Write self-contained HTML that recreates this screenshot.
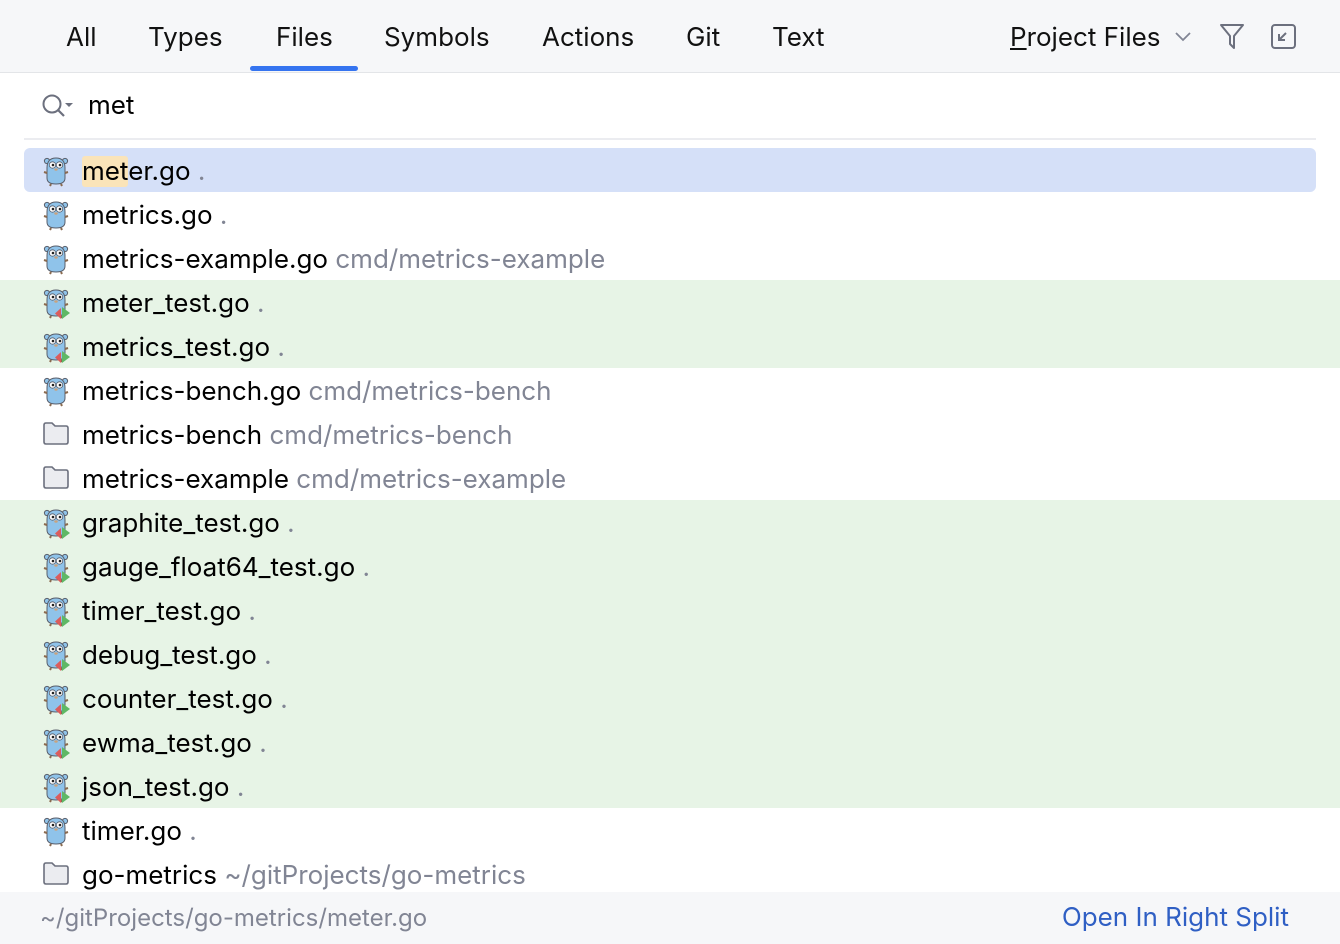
<!DOCTYPE html>
<html><head><meta charset="utf-8"><style>
*{margin:0;padding:0;box-sizing:border-box}
body{width:1340px;height:944px;overflow:hidden;background:#fff;font-family:"Inter","Liberation Sans",sans-serif;color:#000;position:relative}
.hdr{position:absolute;left:0;top:0;width:1340px;height:73px;background:#f6f7f9;border-bottom:1px solid #e3e5e8}
.tab{position:absolute;top:22px;font-size:26px;color:#111}
.ul{position:absolute;left:250px;top:66px;width:108px;height:5px;border-radius:3px;background:#3574f0}
.search{position:absolute;left:88px;top:90px;font-size:26px}
.sep{position:absolute;left:24px;top:138px;width:1292px;height:2px;background:#ebecf0}
.row{position:absolute;left:0;width:1340px;height:44px;font-size:26px;line-height:47px}
.row .t{position:absolute;left:82px;top:0;white-space:nowrap}
.row .g{color:#818594}
.row svg{position:absolute;left:42px;top:7px}
.green{background:#e7f4e6}
.sel{left:24px;width:1292px;background:#d5e0f8;border-radius:6px}
.sel .t{left:58px}.sel svg{left:18px}
.hl{background:#fae4b9;border-radius:3px}
.ftr{position:absolute;left:0;top:892px;width:1340px;height:52px;background:#f6f7f9;font-size:24px;line-height:52px}
</style></head><body>
<svg width="0" height="0" style="position:absolute">
<defs>
<g id="go">
<circle cx="5" cy="6" r="2.6" fill="#8fc3ea" stroke="#5a5f6b" stroke-width="1"/>
<circle cx="23" cy="6" r="2.6" fill="#8fc3ea" stroke="#5a5f6b" stroke-width="1"/>
<path d="M5 13 Q5 3 14 3 Q23 3 23 13 L23 23 Q23 29 14 29 Q5 29 5 23 Z" fill="#8fc3ea" stroke="#5a5f6b" stroke-width="1"/>
<circle cx="10.5" cy="10" r="3.2" fill="#fff" stroke="#5a5f6b" stroke-width=".8"/>
<circle cx="17.5" cy="10" r="3.2" fill="#fff" stroke="#5a5f6b" stroke-width=".8"/>
<circle cx="11" cy="10" r="1.3" fill="#222"/><circle cx="18" cy="10" r="1.3" fill="#222"/>
<ellipse cx="14" cy="14.5" rx="1.8" ry="1.2" fill="#c9a27e"/>
<path d="M2 17 L5 18 M26 17 L23 18 M9 29 L8 31 M19 29 L20 31" stroke="#8a6a4f" stroke-width="2"/>
</g>
<g id="gt"><use href="#go"/>
<path d="M19 21 L13 26.5 L19 32 Z" fill="#db5c5c"/><path d="M20 20 L28 26 L20 32 Z" fill="#5fb865"/></g>
<g id="fd"><path d="M2 6 Q2 4 4 4 L10 4 L13 7 L24 7 Q26 7 26 9 L26 23 Q26 25 24 25 L4 25 Q2 25 2 23 Z" fill="#ebecf0" stroke="#6c707e" stroke-width="1.6"/></g>
</defs></svg>
<div class="hdr">
<span class="tab" style="left:66px">All</span>
<span class="tab" style="left:148px">Types</span>
<span class="tab" style="left:276px">Files</span>
<span class="tab" style="left:384px">Symbols</span>
<span class="tab" style="left:542px">Actions</span>
<span class="tab" style="left:686px">Git</span>
<span class="tab" style="left:772px">Text</span>
<span class="tab" style="left:1010px"><u>P</u>roject Files</span>
<svg style="position:absolute;left:1174px;top:30px" width="18" height="12"><path d="M2 3 L9 10 L16 3" fill="none" stroke="#818594" stroke-width="1.8"/></svg>
<svg style="position:absolute;left:1218px;top:22px" width="28" height="28"><path d="M3 3 L25 3 L16 14 L16 26 L12 22 L12 14 Z" fill="none" stroke="#6c707e" stroke-width="2" stroke-linejoin="round"/></svg>
<svg style="position:absolute;left:1270px;top:23px" width="28" height="28"><rect x="2" y="2" width="23" height="23" rx="3" fill="none" stroke="#6c707e" stroke-width="2"/><path d="M16 10 L9 17 M9 11 L9 17 L15 17" fill="none" stroke="#6c707e" stroke-width="2"/></svg>
<div class="ul"></div>
</div>
<svg style="position:absolute;left:40px;top:92px" width="36" height="28"><circle cx="12" cy="12" r="8.5" fill="none" stroke="#6c707e" stroke-width="2"/><path d="M18 18 L24 24" stroke="#6c707e" stroke-width="2.2"/><path d="M25 11 L33 11 L29 15 Z" fill="#6c707e"/></svg>
<div class="search">met</div>
<div class="sep"></div>

<div class="row sel" style="top:148px"><svg width="28" height="32"><use href="#go"/></svg><span class="t"><span class="hl">met</span>er.go <span class="g">.</span></span></div>
<div class="row" style="top:192px"><svg width="28" height="32"><use href="#go"/></svg><span class="t">metrics.go <span class="g">.</span></span></div>
<div class="row" style="top:236px"><svg width="28" height="32"><use href="#go"/></svg><span class="t">metrics-example.go <span class="g">cmd/metrics-example</span></span></div>
<div class="row green" style="top:280px"><svg width="28" height="32"><use href="#gt"/></svg><span class="t">meter_test.go <span class="g">.</span></span></div>
<div class="row green" style="top:324px"><svg width="28" height="32"><use href="#gt"/></svg><span class="t">metrics_test.go <span class="g">.</span></span></div>
<div class="row" style="top:368px"><svg width="28" height="32"><use href="#go"/></svg><span class="t">metrics-bench.go <span class="g">cmd/metrics-bench</span></span></div>
<div class="row" style="top:412px"><svg width="28" height="32"><use href="#fd"/></svg><span class="t">metrics-bench <span class="g">cmd/metrics-bench</span></span></div>
<div class="row" style="top:456px"><svg width="28" height="32"><use href="#fd"/></svg><span class="t">metrics-example <span class="g">cmd/metrics-example</span></span></div>
<div class="row green" style="top:500px"><svg width="28" height="32"><use href="#gt"/></svg><span class="t">graphite_test.go <span class="g">.</span></span></div>
<div class="row green" style="top:544px"><svg width="28" height="32"><use href="#gt"/></svg><span class="t">gauge_float64_test.go <span class="g">.</span></span></div>
<div class="row green" style="top:588px"><svg width="28" height="32"><use href="#gt"/></svg><span class="t">timer_test.go <span class="g">.</span></span></div>
<div class="row green" style="top:632px"><svg width="28" height="32"><use href="#gt"/></svg><span class="t">debug_test.go <span class="g">.</span></span></div>
<div class="row green" style="top:676px"><svg width="28" height="32"><use href="#gt"/></svg><span class="t">counter_test.go <span class="g">.</span></span></div>
<div class="row green" style="top:720px"><svg width="28" height="32"><use href="#gt"/></svg><span class="t">ewma_test.go <span class="g">.</span></span></div>
<div class="row green" style="top:764px"><svg width="28" height="32"><use href="#gt"/></svg><span class="t">json_test.go <span class="g">.</span></span></div>
<div class="row" style="top:808px"><svg width="28" height="32"><use href="#go"/></svg><span class="t">timer.go <span class="g">.</span></span></div>
<div class="row" style="top:852px"><svg width="28" height="32"><use href="#fd"/></svg><span class="t">go-metrics <span class="g">~/gitProjects/go-metrics</span></span></div>

<div class="ftr"><span style="position:absolute;left:40px;color:#818594">~/gitProjects/go-metrics/meter.go</span><span style="position:absolute;right:51px;color:#2f5fc4;font-size:26px">Open In Right Split</span></div>
</body></html>
